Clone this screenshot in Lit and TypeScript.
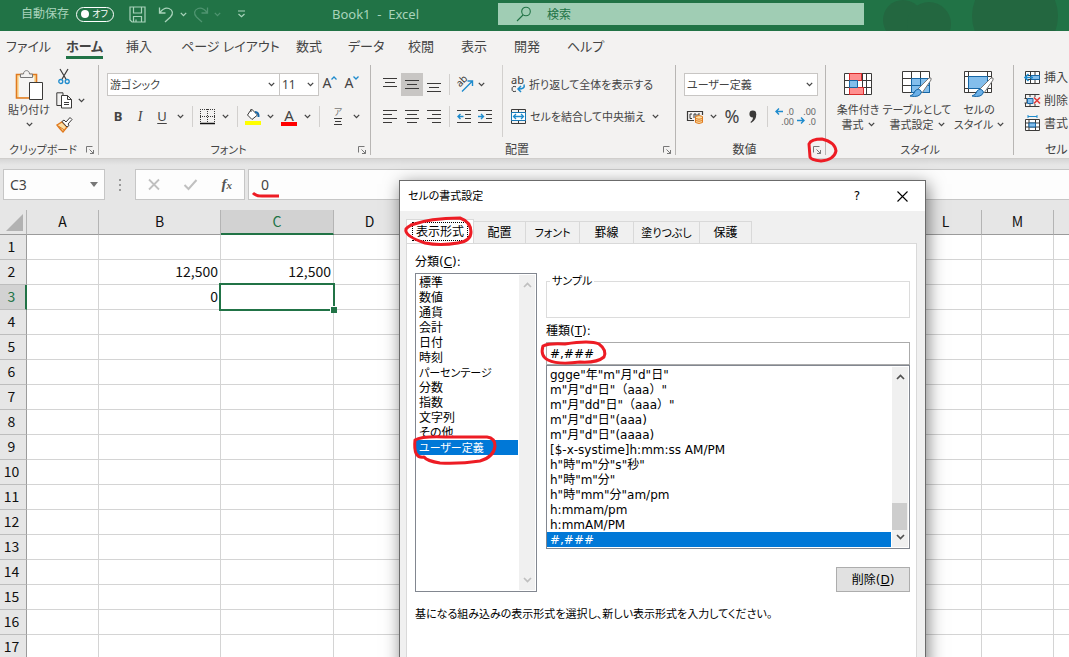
import { LitElement, html, svg, css, nothing, TemplateResult } from "lit";
import { customElement, property, state } from "lit/decorators.js";
import { classMap } from "lit/directives/class-map.js";

const icon = (w: number, h: number, body: TemplateResult) =>
  html`<svg class="icon" width=${w} height=${h} viewBox="0 0 ${w} ${h}" fill="none" aria-hidden="true">${body}</svg>`;

const INK = "#3b3a39";
const BLUE = "#1e8bcd";

// Labels that are mostly kana are set one step smaller than kanji labels.
const isKana = (t: string) => /[ぁ-ヶー]{3}/.test(t);

const chevron = (color = "#444") =>
  icon(7, 5, svg`<path d="M.8 .9L3.5 3.6L6.2 .9" stroke=${color} stroke-width="1.3"/>`);

const launcher = icon(9, 9, svg`<path d="M.5 6.5V.5H6.5M3.5 3.5L7.5 7.5M7.5 4V7.5H4" stroke="#777"/>`);

const bars = (w: number, h: number, rows: number[][]) =>
  icon(w, h, svg`${rows.map(([x, y, len]) => svg`<path d="M${x} ${y + 0.5}h${len}" stroke=${INK}/>`)}`);

const icons = {
  save: icon(17, 17, svg`<path d="M1 1H16V16H3L1 14Z M4.5 1V7H12.500V1 M4.500 16V10.500H12.500V16 M7 16V13.500" stroke="#a9d3bb" stroke-width="1.2"/>`),
  undo: icon(17, 17, svg`<path d="M1.500 1.500V7H7.500 M2 6.500C5 2.500 8 1.500 11 2.500C15 4 15.500 8 12.500 11L7 16" stroke="#a9d3bb" stroke-width="1.3"/>`),
  redo: icon(17, 17, svg`<path d="M15.500 1.500V7H9.500 M15 6.500C12 2.500 9 1.500 6 2.500C2 4 1.500 8 4.500 11L10 16" stroke="#4f9470" stroke-width="1.3"/>`),
  customize: icon(9, 8, svg`<path d="M1 1h7M1.500 4L4.500 6.800L7.500 4" stroke="#a9d3bb" stroke-width="1.2"/>`),
  search: icon(16, 16, svg`<circle cx="10" cy="5.500" r="4.300" stroke="#217346" stroke-width="1.1"/><path d="M7 9L1 15" stroke="#217346" stroke-width="1.1"/>`),
  paste: icon(28, 32, svg`<path d="M1.500 5.500H21.500V29H1.500Z" fill="#fbdfa5" stroke="#e07a1f" stroke-width="1.600"/><path d="M4 8H19V28H4Z" fill="#f6f5f4"/><path d="M5.500 8.500V5H8.500C8.500 .500 14.500 .500 14.500 5H17.500V8.500Z" fill="#f3f2f1" stroke="#777"/><path d="M14.500 13.500H27.500V30.500H14.500Z" fill="#fff" stroke=${INK}/>`),
  cut: icon(12, 17, svg`<path d="M2 1L8.500 12M10 1L3.500 12" stroke=${INK} stroke-width="1.200"/><circle cx="2.800" cy="13.500" r="2" stroke=${BLUE} stroke-width="1.300"/><circle cx="9.200" cy="13.500" r="2" stroke=${BLUE} stroke-width="1.300"/>`),
  copy: icon(17, 17, svg`<path d="M7 3V.800H.800V13.500H5" stroke=${INK}/><path d="M5.500 3.500H11.500L15.500 7.500V16H5.500ZM11.500 3.500V7.500H15.500" fill="#fff" stroke=${INK}/><path d="M8 10.500h5M8 12.500h5" stroke=${INK}/>`),
  brush: icon(17, 17, svg`<path d="M1 9L6 6L11 11L7 16Q4 13 1 9Z" fill="#fbdfa5" stroke="#e07a1f" stroke-width="1.400"/><path d="M3 10.500L8.500 14" stroke="#e07a1f"/><path d="M6 5.500L8 4L10 6L14 1.500L16 3.500L12 8L13 9.500L11 11Z" fill="#fff" stroke=${INK}/>`),
  border: icon(16, 16, svg`<path d="M.500 0V14M7.500 0V14M14.500 0V14M0 .500H15M0 7.500H15" stroke=${INK} stroke-dasharray="1 1"/><path d="M0 14.500H15" stroke="#111" stroke-width="1.500"/>`),
  fill: icon(16, 17, svg`<path d="M6.500 1L12.500 7L7 11.500L2.500 7Z" fill="#fff" stroke=${INK}/><path d="M6 4V1.500" stroke=${INK}/><path d="M10 4Q14 4 13.500 9" stroke="#1767a8" stroke-width="2"/><path d="M0 13H16V17H0Z" fill="#ff0"/>`),
  orient: icon(17, 17, svg`<text x="1" y="9" transform="rotate(-45 5 8)" font-size="10" font-family="Noto Sans" fill=${INK}>ab</text><path d="M5 15.500L15 5.500M10.500 5H15.500V10" stroke=${BLUE} stroke-width="1.400"/>`),
  indentOut: icon(15, 14, svg`<path d="M0 .500H14M8 4.500H14M8 8.500H14M0 12.500H14" stroke=${INK}/><path d="M6.500 6.500H1M3.500 4L1 6.500L3.500 9" stroke=${BLUE} stroke-width="1.400"/>`),
  indentIn: icon(15, 14, svg`<path d="M0 .500H14M8 4.500H14M8 8.500H14M0 12.500H14" stroke=${INK}/><path d="M0 6.500H5.500M3 4L5.500 6.500L3 9" stroke=${BLUE} stroke-width="1.400"/>`),
  wrap: icon(15, 17, svg`<text x="0" y="8" font-size="11" font-family="Noto Sans" fill=${INK}>ab</text><path d="M5 10.800Q1 9.500 1 13Q1 16.500 5 15.200" stroke=${INK}/><path d="M13 8.500Q14.500 13 7.500 13M10 10L7 13L10 16" stroke=${BLUE} stroke-width="1.500"/>`),
  merge: icon(16, 16, svg`<path d="M.500 .500H14.500V14.500H.500ZM7.500 .500V3M7.500 12V14.500" stroke=${INK}/><path d="M.500 3.500H14.500V11.500H.500Z" fill="#fff" stroke="#1a78b4"/><path d="M2.500 7.500H12.500M5 5L2.500 7.500L5 10M10 5L12.500 7.500L10 10" stroke=${BLUE} stroke-width="1.300"/>`),
  currency: icon(17, 14, svg`<path d="M7 10.500H.500V1.500H15.500V5" stroke=${INK} stroke-width="1.200"/><path d="M5 4H3V8.500H5M9 8V4H7V8M13 4H11V6" stroke=${INK}/><path d="M8.500 6.500Q12 4.500 15.500 6.500V12.500Q12 14.500 8.500 12.500Z" fill="#fbdfa5" stroke="#e07a1f"/><path d="M8.500 8.500Q12 10 15.500 8.500M8.500 10.500Q12 12 15.500 10.500" stroke="#e07a1f"/>`),
  comma: icon(8, 14, svg`<circle cx="3.800" cy="4" r="3.400" fill=${INK}/><path d="M7.200 4Q7.600 10 2 13L1.500 12Q4.500 9.500 4 6Z" fill=${INK}/>`),
  cond: icon(29, 24, svg`<path d="M.500 .500H27.500V21.500H.500ZM.500 7.500H27.500M.500 14.500H27.500M5.500 .500V21.500M18.500 .500V21.500M22.500 .500V21.500" fill="#fff" stroke=${INK}/><path d="M5.500 .500H17.500V7.500H5.500ZM5.500 14.500H19.500V21.500H5.500Z" fill="#ff8f8f" stroke="#d92b2b"/><path d="M5.500 7.500H13.500V14.500H5.500Z" fill="#83beec" stroke="#1666a5"/>`),
  tableFmt: icon(30, 28, svg`<path d="M.500 .500H27.500V21.500H.500ZM.500 7.500H27.500M.500 14.500H27.500M9.500 .500V21.500M18.500 .500V21.500" fill="#fff" stroke=${INK}/><path d="M9.500 7.500H27.500V21.500H9.500ZM9.500 14.500H27.500M18.500 7.500V21.500" fill="#83beec" stroke="#1666a5"/><path d="M16 18L27 7Q30 6 29 9L20 22Z" fill="#fff" stroke="#777"/><path d="M8 25Q12 24 13 20Q17 16 19.500 21Q18 27 8 25Z" fill="#6bb0e8" stroke="#1666a5"/>`),
  cellStyle: icon(30, 28, svg`<path d="M.500 .500H27.500V21.500H.500ZM.500 5.500H27.500M4.500 .500V21.500M23.500 .500V21.500M.500 17.500H27.500" fill="#fff" stroke=${INK}/><path d="M4.500 5.500H23.500V17.500H4.500Z" fill="#83beec" stroke="#1666a5"/><path d="M16 18L27 7Q30 6 29 9L20 22Z" fill="#fff" stroke="#777"/><path d="M8 25Q12 24 13 20Q17 16 19.500 21Q18 27 8 25Z" fill="#6bb0e8" stroke="#1666a5"/>`),
  insert: icon(17, 15, svg`<path d="M1.500 1.500H15.500V13.500H1.500ZM1.500 5.500H15.500M1.500 9.500H15.500M6.500 1.500V13.500M11 1.500V13.500" fill="#fff" stroke=${INK}/><path d="M7 5.500H15.500V9.500H7Z" fill="#83beec" stroke="#1666a5"/><path d="M9 7.500H1.500M4.500 4L1 7.500L4.500 11" stroke=${BLUE} stroke-width="1.600"/>`),
  remove: icon(17, 15, svg`<path d="M1 1.500H15.500M1 13.500H15.500M1.500 1.500V5M6 1.500V4M11 1.500V4M1.500 10V13.500M6 11V13.500M11 11V13.500M.500 5.500H3V10H.500" stroke=${INK}/><path d="M3.500 5.500H9V10.500H3.500Z" fill="#83beec" stroke="#1666a5"/><path d="M10 4.500L16 10.500M16 4.500L10 10.500" stroke="#e03c3c" stroke-width="1.700"/>`),
  format: icon(17, 17, svg`<path d="M1.500 4.500H15.500V15.500H1.500ZM1.500 8H15.500M1.500 12H15.500M5 4.500V15.500M11.500 4.500V15.500" fill="#fff" stroke=${INK}/><path d="M5 8H11.500V12H5Z" fill="#83beec" stroke="#1666a5"/><path d="M4 1.500H13M4 0V3M13 0V3" stroke=${BLUE}/>`),
  scrollUp: (c: string) => icon(9, 6, svg`<path d="M1 5L4.500 1.500L8 5" stroke=${c} stroke-width="1.700"/>`),
  scrollDown: (c: string) => icon(9, 6, svg`<path d="M1 1L4.500 4.500L8 1" stroke=${c} stroke-width="1.700"/>`),
};

const base = css`
  * { box-sizing: border-box; }
  button, input, select {
    font: inherit; color: inherit; margin: 0; padding: 0; border: 0;
    background: none; font-feature-settings: inherit; outline: none;
  }
  select { appearance: none; }
  .icon { display: block; flex: none; overflow: visible; }
  .kana { font-size: 11px; }
`;

const CATEGORIES = ["標準", "数値", "通貨", "会計", "日付", "時刻", "パーセンテージ", "分数", "指数", "文字列", "その他", "ユーザー定義"];
const FORMATS = [
  'ggge"年"m"月"d"日"', 'm"月"d"日"（aaa）"', 'm"月"dd"日"（aaa）"', 'm"月"d"日"(aaa)', 'm"月"d"日"(aaaa)',
  "[$-x-systime]h:mm:ss AM/PM", 'h"時"m"分"s"秒"', 'h"時"m"分"', 'h"時"mm"分"am/pm', "h:mmam/pm", "h:mmAM/PM", "#,###",
];

@customElement("list-box")
class ListBox extends LitElement {
  @property({ attribute: false }) items: string[] = [];
  @property() selected = "";
  @property() label = "";
  @property({ type: Boolean }) scrollable = false;

  static styles = [base, css`
    :host { display: flex; background: #fff; border: 1px solid #828790; padding: 1px 1px 1px 0; }
    ul { flex: 1; margin: 0; padding: 0; list-style: none; min-width: 0; }
    li { height: 15px; line-height: 17px; padding-left: 3px; white-space: nowrap; cursor: default; }
    .on { background: #0078d7; color: #fff; }
    .bar { width: 16px; margin-left: 1px; background: #f0f0f0; display: flex; flex-direction: column; align-items: center; justify-content: space-between; padding: 7px 0; }
    .bar.live { justify-content: flex-start; }
    .thumb { align-self: stretch; margin: auto 1px 4px 0; height: 27px; background: #cdcdcd; }
  `];

  render() {
    const c = this.scrollable ? "#505050" : "#bfbfbf";
    return html`
      <ul role="listbox" aria-label=${this.label}>
        ${this.items.map((t) => html`<li role="option" aria-selected=${t === this.selected}
          class=${classMap({ on: t === this.selected, kana: isKana(t) })}
          @click=${() => (this.selected = t)}>${t}</li>`)}
      </ul>
      <div class=${classMap({ bar: true, live: this.scrollable })}>
        ${icons.scrollUp(c)}
        ${this.scrollable ? html`<div class="thumb"></div>` : nothing}
        ${icons.scrollDown(c)}
      </div>`;
  }
}

@customElement("format-dialog")
class FormatDialog extends LitElement {
  @state() tab = "表示形式";

  static styles = [base, css`
    :host {
      display: flex; flex-direction: column; background: #f0f0f0; border: 1px solid #6b6b6b; color: #000;
      font: 12px/15px "DejaVu Sans", "Noto Sans CJK JP", sans-serif; font-feature-settings: "palt";
      box-shadow: 2px 4px 16px rgba(0, 0, 0, .5);
    }
    .title { height: 30px; background: #fff; display: flex; align-items: center; padding: 0 11px 0 8px; }
    .title h2 { flex: 1; margin: 0; font-size: 11px; font-weight: 400; }
    .title button { height: 30px; width: 24px; display: grid; place-items: center; margin-left: 21px; }
    .tabs { display: flex; align-items: flex-end; padding: 7px 6px 0; height: 32px; }
    .tabs button { height: 22px; width: 52px; padding-top: 2px; border: 1px solid #d9d9d9; border-left: 0; border-bottom: 0; white-space: nowrap; }
    .tabs .mid { width: 54px; }
    .tabs .wide { width: 66px; }
    .tabs .sel { height: 25px; width: 68px; padding: 0 5px 1px; background: #fff; border-left: 1px solid #d9d9d9; margin-bottom: -1px; }
    .focus { display: block; border: 1px dotted #000; line-height: 18px; height: 19px; }
    .panel { flex: 1; margin: 0 8px 0 6px; background: #fff; border: 1px solid #d9d9d9; padding: 10px 6px 0 8px; }
    .cols { display: grid; grid-template-columns: 122px 1fr; column-gap: 9px; }
    .label { display: block; height: 15px; line-height: 17px; margin-bottom: 4px; }
    .cats { height: 319px; }
    .formats { font-feature-settings: normal; }
    fieldset { margin: 19px 0 5px; height: 45px; border: 1px solid #dcdcdc; padding: 0; min-width: 0; }
    legend { padding: 0 2px; margin-left: 3px; line-height: 17px; }
    .type { width: 100%; height: 23px; border: 1px solid #ababab; padding: 0 3px; display: block; }
    .actions { display: flex; justify-content: flex-end; margin-top: 18px; }
    .actions button { width: 74px; height: 25px; padding-top: 2px; background: #e1e1e1; border: 1px solid #adadad; }
    .hint { margin: 15px 0 0; }
    @media (max-width: 500px) { .cols { grid-template-columns: 1fr; } }
  `];

  render() {
    const tabs: [string, string][] = [["表示形式", ""], ["配置", ""], ["フォント", "mid"], ["罫線", "mid"], ["塗りつぶし", "wide"], ["保護", ""]];
    return html`
      <div class="title">
        <h2>セルの書式設定</h2>
        <button aria-label="ヘルプ">?</button>
        <button aria-label="閉じる">${icon(11, 11, svg`<path d="M.500 .500L10.500 10.500M10.500 .500L.500 10.500" stroke="#000" stroke-width="1.100"/>`)}</button>
      </div>
      <div class="tabs" role="tablist">
        ${tabs.map(([t, size]) => html`<button role="tab" aria-selected=${t === this.tab}
          class=${classMap({ sel: t === this.tab, mid: size === "mid", wide: size === "wide", kana: isKana(t) })}
          @click=${() => (this.tab = t)}>${t === this.tab ? html`<span class="focus">${t}</span>` : t}</button>`)}
      </div>
      <div class="panel" role="tabpanel">
        <div class="cols">
          <div>
            <span class="label">分類(<u>C</u>):</span>
            <list-box class="cats" label="分類" .items=${CATEGORIES} selected="ユーザー定義"></list-box>
          </div>
          <div>
            <fieldset><legend class="kana">サンプル</legend></fieldset>
            <label class="label" for="type">種類(<u>T</u>):</label>
            <input class="type" id="type" value="#,###" />
            <list-box class="formats" label="種類" scrollable .items=${FORMATS} selected="#,###"></list-box>
            <div class="actions"><button>削除(<u>D</u>)</button></div>
          </div>
        </div>
        <p class="hint kana">基になる組み込みの表示形式を選択し、新しい表示形式を入力してください。</p>
      </div>`;
  }
}

@customElement("excel-ribbon")
class ExcelRibbon extends LitElement {
  static styles = [base, css`
    :host {
      display: flex; height: 97px; background: #f3f2f1; overflow: hidden; color: #444;
      font: 12px/15px "Noto Sans", "Noto Sans CJK JP", sans-serif; font-feature-settings: "palt";
      border-bottom: 1px solid #d0cecc; white-space: nowrap;
    }
    .group { flex: none; display: flex; flex-direction: column; padding-top: 3px; position: relative; }
    .group::after { content: ""; position: absolute; right: 0; top: 3px; bottom: 3px; width: 1px; background: #b8b6b4; }
    .clip { width: 99px; } .font { width: 272px; } .align { width: 305px; } .num { width: 150px; } .style { width: 188px; } .cells { width: 190px; }
    .body { flex: 1; display: flex; }
    .foot { height: 17px; display: flex; align-items: center; }
    .foot span { flex: 1; text-align: center; }
    .foot button { padding: 1px 4px 0 0; }
    button { display: flex; align-items: center; justify-content: center; flex: none; }
    .rows { flex: 1; display: flex; flex-direction: column; gap: 9px; padding: 8px 8px 0; }
    .row { display: flex; align-items: center; height: 23px; }
    .i { width: 22px; height: 23px; }
    .c { width: 15px; height: 23px; }
    .swatch { padding-right: 2px; }
    .on { background: #c8c6c4; }
    .rule { width: 1px; height: 21px; background: #d2d0ce; flex: none; margin: 0 7px 0 4px; }
    .combo { display: flex; align-items: center; border: 1px solid #c8c6c4; background: #fff; height: 23px; padding-right: 4px; }
    .combo select { flex: 1; min-width: 0; height: 21px; padding-left: 2px; }
    .name { flex: 1; } .size { width: 40px; margin-left: -1px; } .wide { flex: 1; margin: 0; }
    .paste { width: 44px; flex-direction: column; justify-content: flex-start; gap: 5px; padding-top: 4px; margin-left: 7px; }
    .paste .icon:first-child { margin-bottom: -4px; }
    .tools { display: flex; flex-direction: column; gap: 7px; padding: 3px 0 0 5px; align-items: flex-start; }
    .tools > div { display: flex; gap: 5px; align-items: center; height: 17px; }
    .tools .snip { padding-left: 2px; }
    .B { font-weight: 700; font-size: 13px; } .I { font: italic 14px "Liberation Serif", serif; } .U { font-size: 13px; text-decoration: underline; text-underline-offset: 2px; }
    .big { font-size: 14px; line-height: 20px; align-items: flex-start; }
    .sup { margin: 3px 0 0; }
    .color { flex-direction: column; font-size: 15px; line-height: 14px; }
    .color::after { content: ""; width: 16px; height: 4px; background: #f00; }
    .ruby { flex-direction: column; font-size: 9px; line-height: 10px; color: #777; }
    .split { display: flex; flex: 1; }
    .left { width: 132px; flex: none; border-right: 1px solid #d2d0ce; margin-bottom: 4px; }
    .left .rows, .right { padding-left: 8px; }
    .left .rows { padding-right: 0; }
    .right { padding-right: 0; }
    .cmd { justify-content: flex-start; gap: 3px; height: 23px; font-size: 11px; }
    .pct { font-size: 18px; width: 22px; }
    .comma { width: 20px; height: 23px; }
    .dec { position: relative; width: 22px; height: 22px; font-size: 9px; line-height: 10px; color: #666; flex-direction: column; align-items: flex-end; padding-right: 3px; }
    .dec svg { position: absolute; left: 0; top: 2px; }
    .tall { flex-direction: column; justify-content: flex-start; padding-top: 6px; line-height: 15px; font-size: 11px; }
    .tall .icon { height: 28px; }
    .tall .art { height: 31px; }
    .tall .two { display: flex; align-items: center; gap: 4px; }
    .tall .two .icon { height: 5px; }
    .styles { padding-left: 8px; display: flex; gap: 1px; }
    .t1 { width: 48px; } .t2 { width: 68px; } .t3 { width: 54px; }
    .stack { display: flex; flex-direction: column; padding: 1px 0 0 10px; }
    .stack button { height: 23px; gap: 3px; justify-content: flex-start; }
    .cells .foot span { flex: none; padding-left: 31px; }
  `];

  foot(label: string, launch = true) {
    return html`<div class="foot"><span class=${classMap({ kana: isKana(label) })}>${label}</span>${launch ? html`<button aria-label="${label}の詳細">${launcher}</button>` : nothing}</div>`;
  }

  render() {
    const caret = (n: string) => html`<button class="c" aria-label=${n}>${chevron()}</button>`;
    const grow = (up: boolean) => html`<button class="i big" aria-label=${up ? "拡大" : "縮小"}>A<span class="sup">${icon(6, 4, up
      ? svg`<path d="M.500 3.500L3 1L5.500 3.500" stroke="#1e8bcd" stroke-width="1.300"/>`
      : svg`<path d="M.500 .500L3 3L5.500 .500" stroke="#1e8bcd" stroke-width="1.300"/>`)}</span></button>`;
    return html`
      <section class="group clip">
        <div class="body">
          <button class="paste kana">${icons.paste}<span>貼り付け</span>${chevron()}</button>
          <div class="tools">
            <div class="snip"><button aria-label="切り取り">${icons.cut}</button></div>
            <div><button aria-label="コピー">${icons.copy}</button>${chevron()}</div>
            <div><button aria-label="書式のコピー">${icons.brush}</button></div>
          </div>
        </div>
        ${this.foot("クリップボード")}
      </section>
      <section class="group font">
        <div class="rows">
          <div class="row">
            <div class="combo name"><select class="kana" aria-label="フォント"><option>游ゴシック</option></select>${chevron()}</div>
            <div class="combo size"><select aria-label="フォント サイズ"><option>11</option></select>${chevron()}</div>
            ${grow(true)}${grow(false)}
          </div>
          <div class="row">
            <button class="i B">B</button><button class="i I">I</button><button class="i U">U</button>${caret("下線")}
            <i class="rule"></i><button class="swatch" aria-label="罫線">${icons.border}</button>${caret("罫線の種類")}
            <i class="rule"></i><button class="swatch" aria-label="塗りつぶし">${icons.fill}</button>${caret("塗りつぶしの色")}
            <button class="i color">A</button>${caret("文字の色")}
            <i class="rule"></i><button class="i ruby">ア${bars(8, 9, [[0, 1, 8], [1, 4, 6], [0, 7, 8]])}</button>${caret("ふりがな")}
          </div>
        </div>
        ${this.foot("フォント")}
      </section>
      <section class="group align">
        <div class="split">
          <div class="left"><div class="rows">
            <div class="row">
              <button class="i" aria-label="上揃え">${bars(14, 14, [[0, 0, 14], [2, 4, 10], [0, 8, 14]])}</button>
              <button class="i on" aria-label="上下中央揃え">${bars(14, 9, [[0, 0, 14], [2, 4, 10], [0, 8, 14]])}</button>
              <button class="i" aria-label="下揃え">${bars(14, 14, [[0, 5, 14], [2, 9, 10], [0, 13, 14]])}</button>
              <i class="rule"></i>${icons.orient}${caret("方向")}
            </div>
            <div class="row">
              <button class="i" aria-label="左揃え">${bars(14, 14, [[0, 0, 14], [0, 4, 9], [0, 8, 14], [0, 12, 9]])}</button>
              <button class="i" aria-label="中央揃え">${bars(14, 14, [[0, 0, 14], [2, 4, 10], [0, 8, 14], [2, 12, 10]])}</button>
              <button class="i" aria-label="右揃え">${bars(14, 14, [[0, 0, 14], [5, 4, 9], [0, 8, 14], [5, 12, 9]])}</button>
              <i class="rule"></i>
              <button class="swatch" aria-label="インデントを減らす">${icons.indentOut}</button>
              <button class="i" aria-label="インデントを増やす">${icons.indentIn}</button>
            </div>
          </div></div>
          <div class="rows right">
            <button class="cmd">${icons.wrap}折り返して全体を表示する</button>
            <div class="row"><button class="cmd">${icons.merge}セルを結合して中央揃え</button>&nbsp;${caret("結合")}</div>
          </div>
        </div>
        ${this.foot("配置")}
      </section>
      <section class="group num">
        <div class="rows">
          <div class="row"><div class="combo wide"><select class="kana" aria-label="表示形式"><option>ユーザー定義</option></select>${chevron()}</div></div>
          <div class="row">
            <button class="i" aria-label="通貨">${icons.currency}</button>${caret("通貨の種類")}
            <button class="pct">%</button><button class="comma" aria-label="桁区切り">${icons.comma}</button>
            <i class="rule"></i>
            <button class="dec"><span>.0</span><span>.00</span>${icon(9, 7, svg`<path d="M8 3.500H1M4 .500L1 3.500L4 6.500" stroke="#1e8bcd" stroke-width="1.400"/>`)}</button>
            <button class="dec"><span>.00</span><span>.0</span>${icon(9, 7, svg`<path d="M0 12.500H7M4 9.500L7 12.500L4 15.500" stroke="#1e8bcd" stroke-width="1.400"/>`)}</button>
          </div>
        </div>
        ${this.foot("数値")}
      </section>
      <section class="group style">
        <div class="body styles">
          <button class="tall t1"><span class="art">${icons.cond}</span><span>条件付き</span><span class="two">書式${chevron()}</span></button>
          <button class="tall t2"><span class="art">${icons.tableFmt}</span><span>テーブルとして</span><span class="two">書式設定${chevron()}</span></button>
          <button class="tall t3"><span class="art">${icons.cellStyle}</span><span>セルの</span><span class="two">スタイル${chevron()}</span></button>
        </div>
        ${this.foot("スタイル", false)}
      </section>
      <section class="group cells">
        <div class="body stack">
          <button>${icons.insert}挿入</button><button>${icons.remove}削除</button><button>${icons.format}書式</button>
        </div>
        ${this.foot("セル", false)}
      </section>`;
  }
}

@customElement("work-sheet")
class WorkSheet extends LitElement {
  static styles = [base, css`
    :host { display: block; overflow: hidden; background: #fff; font: 14px/20px "Noto Sans CJK JP", sans-serif; color: #111; }
    table { table-layout: fixed; border-collapse: separate; border-spacing: 0; width: 1126px; }
    .cr { width: 27px; } .cb { width: 122px; } .cc { width: 113px; } .cn { width: 72px; }
    th, td { height: 25px; padding: 0 0 2px; font-weight: 400; border-right: 1px solid #d4d4d4; border-bottom: 1px solid #d4d4d4; }
    th { background: #e6e6e6; }
    thead th { border-right-color: #b4b4b4; border-bottom-color: #9b9b9b; }
    tbody th { border-right-color: #9b9b9b; border-bottom-color: #bdbdbd; padding-right: 3px; }
    th.hot { background: #d2d2d2; color: #217346; }
    thead th.hot { border-bottom: 2px solid #217346; padding-bottom: 1px; }
    tbody th.hot { border-right: 2px solid #217346; padding-right: 2px; }
    td { text-align: right; padding-right: 2px; }
    .all svg { margin: 3px 3px 0 auto; }
    .cur { position: relative; }
    .cur::before { content: ""; position: absolute; inset: -2px; border: 2px solid #217346; }
    .cur::after { content: ""; position: absolute; right: -4px; bottom: -4px; width: 6px; height: 6px; background: #217346; border: 1px solid #fff; border-width: 1px 0 0 1px; }
  `];

  cells: Record<string, string> = { B2: "12,500", C2: "12,500", B3: "0" };

  render() {
    const cols = "ABCDEFGHIJKLMN".split("");
    return html`<table>
      <colgroup><col class="cr" />${cols.map((c) => html`<col class=${c === "B" ? "cb" : c === "C" ? "cc" : "cn"} />`)}</colgroup>
      <thead><tr>
        <th class="all">${icon(17, 17, svg`<path d="M17 0V17H0Z" fill="#b2b2b2"/>`)}</th>
        ${cols.map((c) => html`<th scope="col" class=${classMap({ hot: c === "C" })}>${c === "N" ? nothing : c}</th>`)}
      </tr></thead>
      <tbody>${Array.from({ length: 17 }, (_, r) => html`<tr>
        <th scope="row" class=${classMap({ hot: r === 2 })}>${r + 1}</th>
        ${cols.map((c) => html`<td class=${classMap({ cur: c === "C" && r === 2 })}>${this.cells[c + (r + 1)] ?? nothing}</td>`)}
      </tr>`)}</tbody>
    </table>`;
  }
}

@customElement("app-root")
class AppRoot extends LitElement {
  static styles = [base, css`
    :host {
      display: flex; flex-direction: column; height: 100vh; position: relative; overflow: hidden; background: #e6e6e6;
      font: 12px/16px "Noto Sans", "Noto Sans CJK JP", sans-serif; font-feature-settings: "palt"; color: #444;
    }
    header { flex: none; position: relative; height: 31px; background: #217346; color: #a9d3bb; display: flex; align-items: center; padding: 0 10px 3px 21px; }
    .auto { display: flex; align-items: center; gap: 7px; width: 108px; }
    .toggle { width: 38px; height: 15px; border: 1px solid #fff; border-radius: 8px; color: #fff; font-size: 9px; line-height: 12px; display: flex; align-items: center; justify-content: space-between; padding: 0 5px 0 4px; }
    .dot { width: 8px; height: 8px; border-radius: 50%; background: #fff; }
    .quick { display: flex; align-items: center; gap: 5px; width: 203px; }
    .quick button + button { margin-left: 7px; }
    .doc { white-space: pre; width: 166px; font-size: 13px; }
    .search { flex: none; width: 34.2vw; height: 22px; background: #a0cdb4; color: #217346; display: flex; align-items: center; gap: 15px; padding-left: 18px; }
    .search input { flex: 1; height: 22px; }
    .search input::placeholder { color: #217346; opacity: 1; }
    .clouds { position: absolute; right: 0; top: 0; }
    nav {
      flex: none; height: 31px; background: #f3f2f1; padding: 0 6px; font-size: 13px;
      display: grid; grid-template-columns: 60px 60px 55px 115px 52px 60px 53px 53px 53px 53px; justify-items: start;
    }
    nav button { height: 28px; padding: 2px 0 0; white-space: nowrap; }
    nav .sel { font-weight: 700; border-bottom: 3px solid #217346; padding-top: 4px; }
    .formula { flex: none; height: 51px; background: linear-gradient(#d6d6d6, #e6e6e6 6px); display: flex; padding: 10px 0 10px 3px; font-size: 14px; }
    .box { background: #fdfdfd; border: 1px solid #c6c6c6; height: 31px; display: flex; align-items: center; }
    .namebox { width: 102px; padding: 2px 6px; }
    .namebox input { flex: 1; min-width: 0; }
    .dots { width: 30px; display: grid; place-items: center; }
    .fx { width: 110px; justify-content: space-between; padding: 0 12px; margin-right: 3px; }
    .fx i { font: italic 700 15px "Liberation Serif", serif; color: #555; }
    .fx small { font-size: 11px; }
    .entry { flex: 1; border-right: 0; }
    .entry input { width: 100%; padding-left: 12px; }
    work-sheet { flex: 1; min-height: 0; }
    format-dialog { position: absolute; left: 399px; top: 180px; bottom: -12px; width: 527px; }
    .marks { position: absolute; left: 0; top: 0; pointer-events: none; }
  `];

  render() {
    const tabs = ["ファイル", "ホーム", "挿入", "ページ レイアウト", "数式", "データ", "校閲", "表示", "開発", "ヘルプ"];
    return html`
      <header>
        <svg class="clouds" width="190" height="31" aria-hidden="true"><g fill="#236740"><circle cx="24" cy="20" r="20"/><circle cx="50" cy="24" r="22"/><circle cx="136" cy="16" r="43"/></g></svg>
        <div class="auto">自動保存<button class="toggle" role="switch" aria-checked="false" aria-label="自動保存"><span class="dot"></span>オフ</button></div>
        <div class="quick">
          <button aria-label="上書き保存">${icons.save}</button>
          <button aria-label="元に戻す">${icons.undo}</button>${chevron("#a9d3bb")}
          <button aria-label="やり直し">${icons.redo}</button>${chevron("#4f9470")}
          <button aria-label="カスタマイズ">&nbsp;&nbsp;</button>${icons.customize}
        </div>
        <div class="doc">Book1  -  Excel</div>
        <label class="search">${icons.search}<input placeholder="検索" aria-label="検索" /></label>
      </header>
      <nav>${tabs.map((t) => html`<button class=${classMap({ sel: t === "ホーム" })}>${t}</button>`)}</nav>
      <excel-ribbon></excel-ribbon>
      <div class="formula">
        <div class="box namebox"><input aria-label="名前ボックス" value="C3" />${icon(8, 5, svg`<path d="M0 0H8L4 5Z" fill="#777"/>`)}</div>
        <div class="dots">${icon(2, 12, svg`<path d="M0 1H2M0 6H2M0 11H2" stroke="#999" stroke-width="2"/>`)}</div>
        <div class="box fx">
          <button aria-label="キャンセル">${icon(12, 11, svg`<path d="M1 .500L11 10.500M11 .500L1 10.500" stroke="#c0c0c0" stroke-width="1.800"/>`)}</button>
          <button aria-label="入力">${icon(13, 11, svg`<path d="M.500 6L4.500 10L12.500 1" stroke="#c0c0c0" stroke-width="2"/>`)}</button>
          <button aria-label="関数の挿入"><i>f<small>x</small></i></button>
        </div>
        <div class="box entry"><input aria-label="数式バー" value="0" /></div>
      </div>
      <work-sheet></work-sheet>
      <format-dialog role="dialog" aria-label="セルの書式設定"></format-dialog>
      <svg class="marks" width="1069" height="657" fill="none" stroke="#ed1c24" stroke-width="3" stroke-linecap="round" stroke-linejoin="round" aria-hidden="true">
        <path d="M809 144Q811 139 822 139Q835 142 836 151Q834 160 821 161Q811 160 810 157Z"/>
        <path d="M253 193Q256 196 262 196H279" stroke-linecap="butt"/>
        <path d="M411 225Q430 218 460 218Q471 222 471 232Q471 241 458 243Q440 246 425 243Q404 236 406 229Q409 225 418 223"/>
        <path d="M543 346Q549 343 565 344Q590 340 599 344Q607 350 604 357Q597 363 580 362Q558 365 548 360Q540 356 543 346Z"/>
        <path d="M415 440Q422 436 445 437H487Q495 438 495 446Q494 457 480 461Q460 464 440 463Q427 461 424 457Q413 459 415 440Z"/>
      </svg>`;
  }
}
